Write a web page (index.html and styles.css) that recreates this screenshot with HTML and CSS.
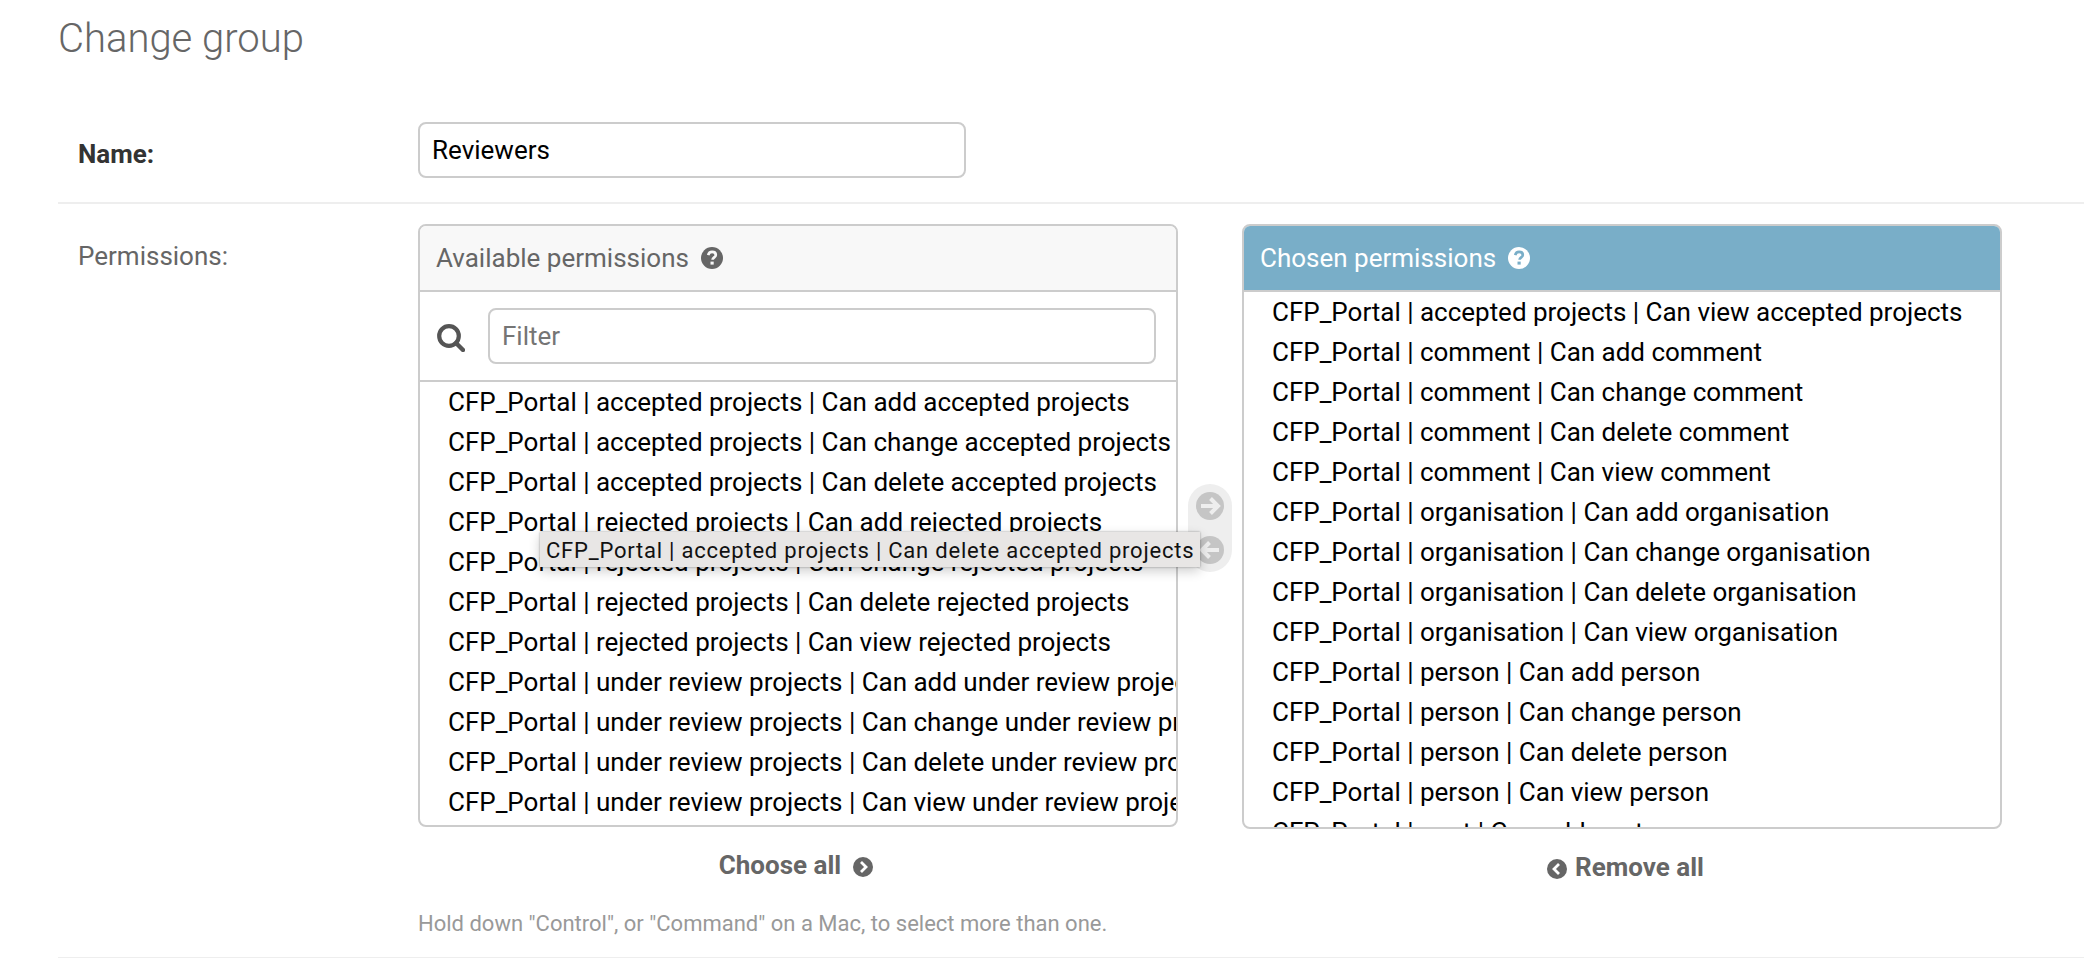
FILE: index.html
```html
<!DOCTYPE html>
<html lang="en">
<head>
<meta charset="utf-8">
<title>Change group</title>
<link rel="stylesheet" href="styles.css">
</head>
<body>
<main class="content">
  <h1 class="title">Change group</h1>
  <form class="form">
    <div class="form-row name-row">
      <label class="label required">Name:</label>
      <div class="text-input name-input">Reviewers</div>
    </div>
    <div class="form-row permissions-row">
      <label class="label">Permissions:</label>
      <div class="field">
        <div class="selector">
          <div class="column">
            <section class="box">
              <h2 class="box-title">Available permissions
                <svg class="help-icon" viewBox="0 0 22 22"><circle cx="11" cy="11" r="11" fill="#666"/><path d="M7.2 8.1C7.7 5.9 9 4.9 11.1 4.9c2.2 0 3.7 1.2 3.7 3 0 2.5-3.2 2.4-3.2 4.9" fill="none" stroke="#f8f8f8" stroke-width="2.7"/><path d="M9.5 14.6h3.2v3H9.5z" fill="#f8f8f8"/></svg>
              </h2>
              <div class="filter">
                <svg class="search-icon" viewBox="0 0 28 28"><circle cx="12" cy="12" r="9.8" fill="none" stroke="#555" stroke-width="4.2"/><path d="M19 19l7 7" stroke="#555" stroke-width="4.4" stroke-linecap="round"/></svg>
                <div class="text-input filter-input">Filter</div>
              </div>
              <ul class="options">
                <li>CFP_Portal | accepted projects | Can add accepted projects</li>
                <li>CFP_Portal | accepted projects | Can change accepted projects</li>
                <li>CFP_Portal | accepted projects | Can delete accepted projects</li>
                <li>CFP_Portal | rejected projects | Can add rejected projects</li>
                <li>CFP_Portal | rejected projects | Can change rejected projects</li>
                <li>CFP_Portal | rejected projects | Can delete rejected projects</li>
                <li>CFP_Portal | rejected projects | Can view rejected projects</li>
                <li>CFP_Portal | under review projects | Can add under review projects</li>
                <li>CFP_Portal | under review projects | Can change under review projects</li>
                <li>CFP_Portal | under review projects | Can delete under review projects</li>
                <li>CFP_Portal | under review projects | Can view under review projects</li>
              </ul>
            </section>
            <a class="bulk choose-all">Choose all
              <svg class="bulk-icon" viewBox="0 0 20 20"><circle cx="10" cy="10" r="10" fill="#666"/><path d="M8 5l5 5-5 5" fill="none" stroke="#fff" stroke-width="2.8"/></svg>
            </a>
          </div>
          <div class="chooser">
            <svg viewBox="0 0 28 28"><circle cx="14" cy="14" r="14" fill="#c5c5c5"/><path d="M5 14h16M14.5 6.5L22 14l-7.500 7.500" fill="none" stroke="#eee" stroke-width="4"/></svg>
            <svg viewBox="0 0 28 28"><circle cx="14" cy="14" r="14" fill="#c5c5c5"/><path d="M23 14H7M13.500 6.500L6 14l7.500 7.500" fill="none" stroke="#eee" stroke-width="4"/></svg>
          </div>
          <div class="column">
            <section class="box chosen">
              <h2 class="box-title">Chosen permissions
                <svg class="help-icon" viewBox="0 0 22 22"><circle cx="11" cy="11" r="11" fill="#fff"/><path d="M7.2 8.1C7.7 5.9 9 4.9 11.1 4.9c2.2 0 3.7 1.2 3.7 3 0 2.5-3.2 2.4-3.2 4.9" fill="none" stroke="#79aec8" stroke-width="2.7"/><path d="M9.500 14.600h3.200v3H9.500z" fill="#79aec8"/></svg>
              </h2>
              <ul class="options">
                <li>CFP_Portal | accepted projects | Can view accepted projects</li>
                <li>CFP_Portal | comment | Can add comment</li>
                <li>CFP_Portal | comment | Can change comment</li>
                <li>CFP_Portal | comment | Can delete comment</li>
                <li>CFP_Portal | comment | Can view comment</li>
                <li>CFP_Portal | organisation | Can add organisation</li>
                <li>CFP_Portal | organisation | Can change organisation</li>
                <li>CFP_Portal | organisation | Can delete organisation</li>
                <li>CFP_Portal | organisation | Can view organisation</li>
                <li>CFP_Portal | person | Can add person</li>
                <li>CFP_Portal | person | Can change person</li>
                <li>CFP_Portal | person | Can delete person</li>
                <li>CFP_Portal | person | Can view person</li>
                <li>CFP_Portal | post | Can add post</li>
              </ul>
            </section>
            <a class="bulk remove-all">
              <svg class="bulk-icon" viewBox="0 0 20 20"><circle cx="10" cy="10" r="10" fill="#666"/><path d="M12 5l-5 5 5 5" fill="none" stroke="#fff" stroke-width="2.8"/></svg>
              Remove all</a>
          </div>
        </div>
        <p class="help">Hold down "Control", or "Command" on a Mac, to select more than one.</p>
      </div>
    </div>
  </form>
</main>
<div class="tooltip">CFP_Portal | accepted projects | Can delete accepted projects</div>
</body>
</html>
```
FILE: styles.css
```css
* { box-sizing: border-box; }

body {
  margin: 0;
  height: 958px;
  overflow: hidden;
  background: #fff;
  color: #666;
  font: 26px/40px Roboto, "Liberation Sans", sans-serif;
}

.content { padding: 15px 0 0 58px; }

.title {
  margin: 0;
  font-size: 40px;
  font-weight: 300;
  line-height: 48px;
}

.form { padding-top: 39px; }

.form-row {
  display: flex;
  padding: 20px 0 0 20px;
  border-bottom: 2px solid #eee;
}

.name-row { height: 102px; }
.permissions-row { height: 755px; }

.label {
  flex: none;
  width: 340px;
  padding-top: 12px;
}

.required { color: #333; font-weight: 700; }

.text-input {
  height: 56px;
  padding: 0 12px;
  border: 2px solid #ccc;
  border-radius: 8px;
  line-height: 52px;
}

.name-input { width: 548px; color: #000; }

.selector { display: flex; }
.column { width: 760px; }

.box {
  height: 603px;
  overflow: hidden;
  border: 2px solid #ccc;
  border-radius: 8px;
}

.box.chosen { height: 605px; }

.box-title {
  display: flex;
  align-items: center;
  gap: 12px;
  height: 66px;
  margin: 0;
  padding: 0 16px;
  border-bottom: 2px solid #ccc;
  background: #f8f8f8;
  font-size: 26px;
  font-weight: 400;
}

.chosen .box-title { background: #79aec8; color: #fff; }

.help-icon { width: 22px; height: 22px; }

.filter {
  display: flex;
  align-items: center;
  gap: 23px;
  height: 90px;
  padding: 0 20px 0 17px;
  border-bottom: 2px solid #ccc;
}

.search-icon { flex: none; width: 28px; height: 28px; margin-top: 3px; }
.filter-input { flex: 1; color: #757575; }

.options {
  margin: 0;
  padding: 0 0 0 28px;
  list-style: none;
  color: #000;
  white-space: nowrap;
  letter-spacing: -.015px;
}

.bulk {
  display: flex;
  align-items: center;
  justify-content: center;
  height: 40px;
  margin-top: 18px;
  font-weight: 700;
}

.choose-all { gap: 12px; padding-right: 4px; }
.remove-all { gap: 8px; padding-left: 7px; }
.bulk-icon { width: 20px; height: 20px; margin-top: 3px; }

.chooser {
  display: flex;
  flex-direction: column;
  gap: 16px;
  width: 44px;
  height: 88px;
  margin: 260px 10px 0;
  padding: 8px;
  border-radius: 22px;
  background: #eee;
}

.chooser svg { width: 28px; height: 28px; }

.help {
  margin: 17px 0 0;
  color: #999;
  font-size: 22px;
  line-height: 40px;
}

.tooltip {
  position: absolute;
  left: 540px;
  top: 532px;
  width: 660px;
  height: 35px;
  padding-left: 6px;
  background: #e8e6e5;
  box-shadow: 0 0 2px rgba(0, 0, 0, .35), 0 4px 12px rgba(0, 0, 0, .2);
  color: #111;
  font-size: 22px;
  line-height: 37px;
  letter-spacing: .78px;
  white-space: nowrap;
}
```
